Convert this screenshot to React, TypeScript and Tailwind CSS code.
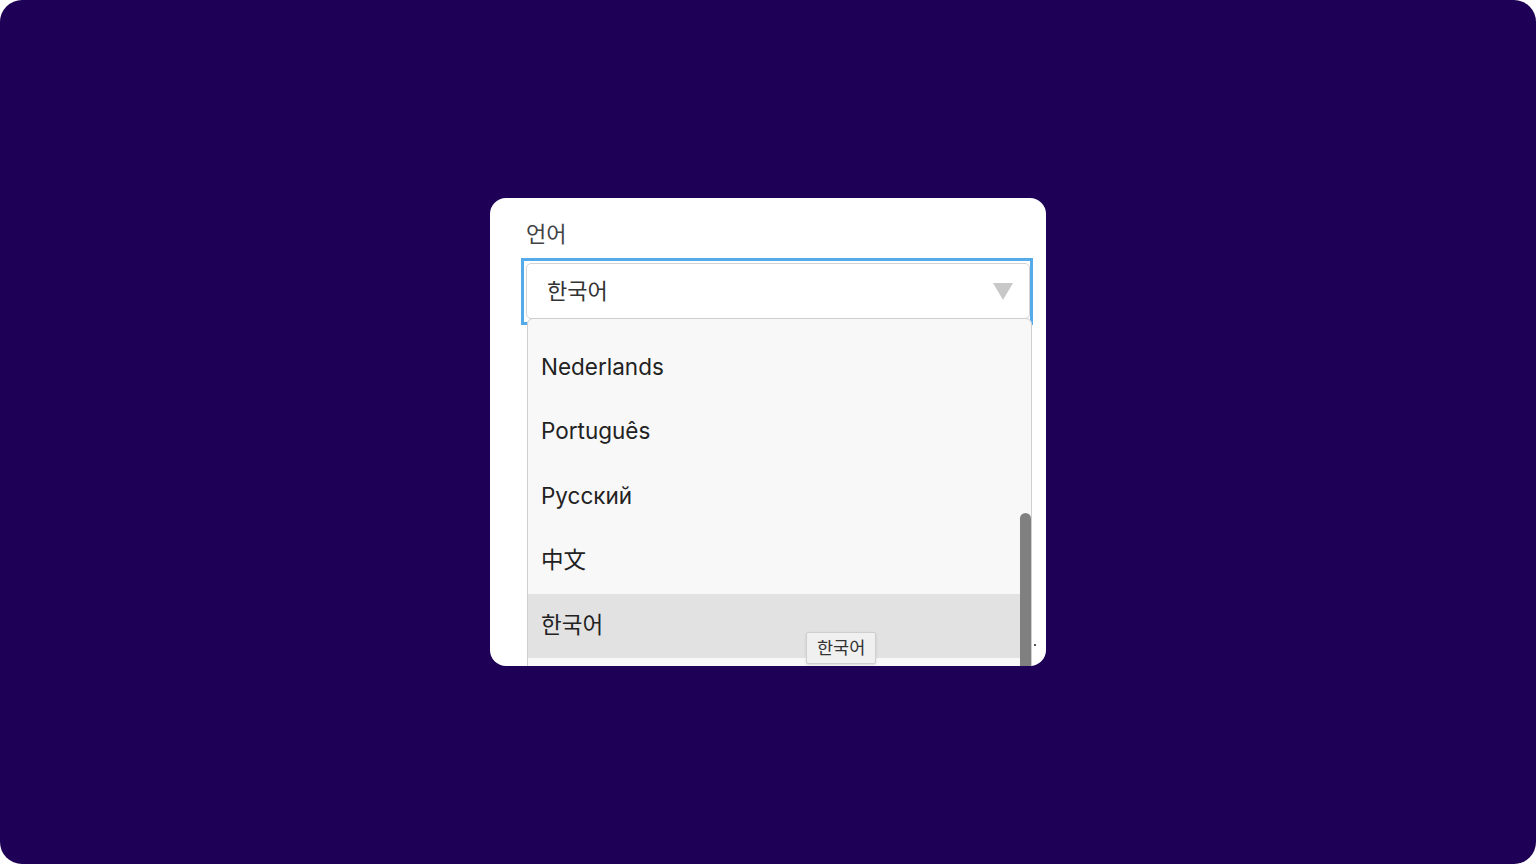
import React from 'react';

const languages = ['Italiano', 'Nederlands', 'Português', 'Русский', '中文', '한국어', '日本語'];

function App() {
  const selected = '한국어';

  return (
    <div className="h-[864px] w-[1536px] bg-white">
      <div className="flex h-full w-full items-center justify-center rounded-[22px] bg-[#1e0056] font-['Inter','Noto_Sans_CJK_KR',sans-serif]">
        <div className="relative h-[468px] w-[556px] overflow-hidden rounded-[16px] bg-white pl-[31px] pr-[13px] pt-[20px]">
          <div className="pl-[5px] text-[22px] leading-[32px] text-[#444]">언어</div>

          <div className="relative mt-[8px] h-[67px] border-[3px] border-[#55aaea] py-[2px] pl-[2px]">
            <div className="flex h-[56px] items-center justify-between rounded-[5px] border border-[#d4d4d4] bg-white pl-[20px] pr-[16px]">
              <span className="text-[22px] text-[#333]">{selected}</span>
              <svg width="20" height="17" viewBox="0 0 20 17">
                <path d="M0 0 H20 L10 17 Z" fill="#c8c8c8" />
              </svg>
            </div>

            {/* open listbox */}
            <div className="absolute left-[3px] top-[57px] z-10 h-[360px] w-[505px] overflow-hidden rounded-t-[6px] border border-[#cfcfcf] bg-[#f8f8f8]">
              <div className="mt-[-48px]">
                {languages.map((lang) => (
                  <div
                    key={lang}
                    className={`flex h-[64.5px] items-center pl-[13px] pb-[2px] text-[22.5px] text-[#222] ${lang === selected ? 'bg-[#e2e2e2]' : ''}`}
                  >
                    {lang}
                  </div>
                ))}
              </div>
              <div className="absolute right-0 top-[194px] h-[200px] w-[11px] rounded-t-full bg-[#808080]" />
            </div>
          </div>

          {/* tooltip */}
          <div className="absolute left-[316px] top-[434px] z-20 rounded-[2px] border border-[#cfcfcf] bg-[#f0f0f0] px-[10px] py-[3px] text-[17.5px] leading-[24px] text-[#333] shadow-sm">
            한국어
          </div>
          <div className="absolute left-[544px] top-[446px] h-[2px] w-[2px] bg-[#555]" />
        </div>
      </div>
    </div>
  );
}

export default App;
